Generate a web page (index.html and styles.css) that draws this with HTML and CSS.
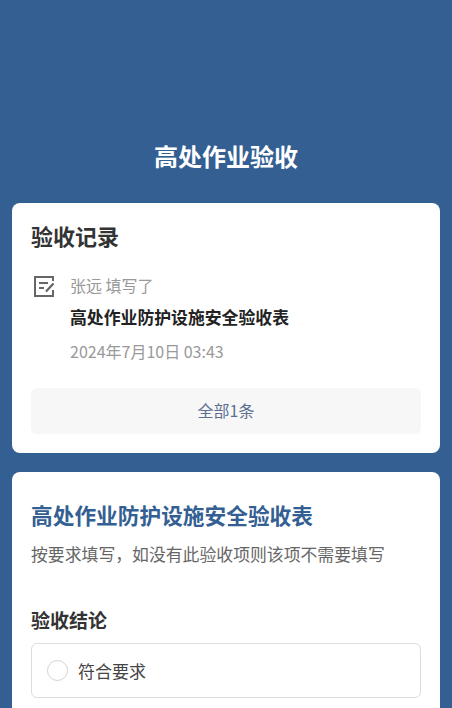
FILE: index.html
```html
<!DOCTYPE html>
<html lang="zh-CN">
<head>
  <meta charset="UTF-8">
  <meta name="viewport" content="width=device-width, initial-scale=1.0">
  <title>高处作业验收</title>
  <link rel="stylesheet" href="styles.css">
</head>
<body>
  <div class="page">
    <header class="page-header">
      <h1>高处作业验收</h1>
    </header>

    <section class="card record-card">
      <h2 class="card-title">验收记录</h2>
      <div class="record">
        <svg class="record-icon" viewBox="0 0 24 24" width="24" height="24" fill="none" stroke="#666" stroke-width="2">
          <path d="M22 8V4H4V23H22V17"/>
          <path d="M8 10H17M8 15H13"/>
          <path d="M15 18.500L22.500 10.500" stroke-width="2.200"/>
        </svg>
        <div class="record-body">
          <p class="record-who">张远 填写了</p>
          <p class="record-name">高处作业防护设施安全验收表</p>
          <p class="record-time">2024年7月10日 03:43</p>
        </div>
      </div>
      <button class="all-btn" type="button">全部1条</button>
    </section>

    <section class="card form-card">
      <h2 class="form-title">高处作业防护设施安全验收表</h2>
      <p class="form-hint">按要求填写，如没有此验收项则该项不需要填写</p>
      <h3 class="field-label">验收结论</h3>
      <label class="option">
        <span class="radio"></span>
        <span>符合要求</span>
      </label>
    </section>
  </div>
</body>
</html>
```

FILE: styles.css
```css
* {
  box-sizing: border-box;
  margin: 0;
  padding: 0;
}

html, body {
  height: 100%;
  overflow: hidden;
}

body {
  font-family: "Noto Sans CJK SC", "Noto Sans", sans-serif;
  background: #345f93;
  color: #333;
}

.page {
  padding: 0 12px;
}

.page-header {
  height: 203px;
  padding-top: 139px;
  text-align: center;
}

.page-header h1 {
  color: #fff;
  font-size: 24px;
  line-height: 34px;
  font-weight: 700;
}

.card {
  background: #fff;
  border-radius: 8px;
  padding: 19px;
}

.record-card {
  height: 250px;
  margin-bottom: 19px;
}

.card-title {
  font-size: 22px;
  line-height: 30px;
  font-weight: 700;
  color: #333;
  margin-top: -2px;
}

.record {
  display: flex;
  margin-top: 22px;
}

.record-icon {
  flex-shrink: 0;
  margin: 1px 15px 0 0;
}

.record-who {
  font-size: 16px;
  line-height: 26px;
  color: #999;
}

.record-name {
  margin-top: 6px;
  font-size: 16.850px;
  line-height: 26px;
  font-weight: 700;
  color: #222;
}

.record-time {
  margin-top: 8px;
  font-size: 16px;
  line-height: 26px;
  color: #999;
}

.all-btn {
  display: block;
  width: 100%;
  height: 46px;
  margin-top: 24px;
  padding-bottom: 2px;
  border: none;
  border-radius: 6px;
  background: #f7f7f7;
  color: #5a6f91;
  font-family: inherit;
  font-size: 16px;
}

.form-card {
  height: 300px;
  padding-top: 27px;
}

.form-title {
  font-size: 21.700px;
  line-height: 32px;
  font-weight: 700;
  color: #345f93;
}

.form-hint {
  margin-top: 10px;
  font-size: 16.850px;
  line-height: 26px;
  color: #666;
}

.field-label {
  margin-top: 39px;
  font-size: 19px;
  line-height: 28px;
  font-weight: 700;
  color: #333;
}

.option {
  display: flex;
  align-items: center;
  gap: 10px;
  height: 55px;
  margin-top: 9px;
  padding: 0 15px;
  border: 1px solid #ddd;
  border-radius: 6px;
  font-size: 17px;
  color: #444;
}

.radio {
  width: 21px;
  height: 21px;
  border: 1.500px solid #d2d2d2;
  border-radius: 50%;
}
```
